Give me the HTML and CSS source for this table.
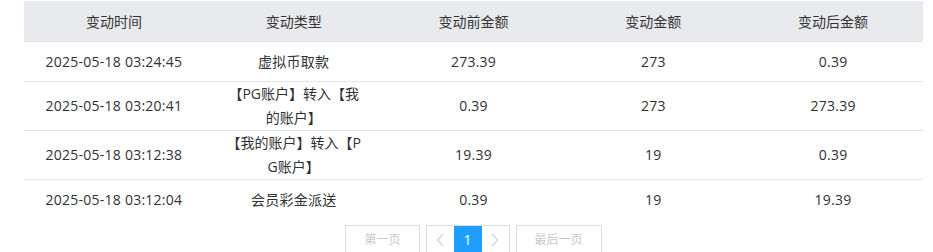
FILE: index.html
```html
<!DOCTYPE html>
<html lang="zh-CN">
<head>
<meta charset="utf-8">
<title>资金变动记录</title>
<link rel="stylesheet" href="styles.css">
</head>
<body>
<div class="wrap">
  <table class="records">
    <thead>
      <tr>
        <th>变动时间</th>
        <th>变动类型</th>
        <th>变动前金额</th>
        <th>变动金额</th>
        <th>变动后金额</th>
      </tr>
    </thead>
    <tbody>
      <tr>
        <td>2025-05-18 03:24:45</td>
        <td>虚拟币取款</td>
        <td>273.39</td>
        <td>273</td>
        <td>0.39</td>
      </tr>
      <tr>
        <td>2025-05-18 03:20:41</td>
        <td class="wrapcell">【PG账户】转入【我的账户】</td>
        <td>0.39</td>
        <td>273</td>
        <td>273.39</td>
      </tr>
      <tr>
        <td>2025-05-18 03:12:38</td>
        <td class="wrapcell">【我的账户】转入【PG账户】</td>
        <td>19.39</td>
        <td>19</td>
        <td>0.39</td>
      </tr>
      <tr>
        <td>2025-05-18 03:12:04</td>
        <td>会员彩金派送</td>
        <td>0.39</td>
        <td>19</td>
        <td>19.39</td>
      </tr>
    </tbody>
  </table>
  <div class="pager">
    <a class="pg-btn disabled">第一页</a>
    <div class="pg-group">
      <a class="pg-arrow"><svg width="8" height="14" viewBox="0 0 8 14"><path d="M7 1 L1.5 7 L7 13" fill="none" stroke="#d2d2d2" stroke-width="1.2"/></svg></a>
      <a class="pg-num active">1</a>
      <a class="pg-arrow"><svg width="8" height="14" viewBox="0 0 8 14"><path d="M1 1 L6.5 7 L1 13" fill="none" stroke="#d2d2d2" stroke-width="1.2"/></svg></a>
    </div>
    <a class="pg-btn disabled">最后一页</a>
  </div>
</div>
</body>
</html>
```

FILE: styles.css
```css
html, body {
  margin: 0;
  padding: 0;
  background: #fff;
}
body {
  font-family: "Open Sans", "Noto Sans CJK SC", sans-serif;
  font-size: 14px;
  color: #333;
}
.wrap {
  padding: 1px 10px 0 24px;
}
.records {
  width: 899px;
  table-layout: fixed;
  border-collapse: collapse;
}
.records th {
  background: #e9eaed;
  font-weight: normal;
  height: 40px;
  padding: 0;
  text-align: center;
  color: #333;
  border-bottom: 1px solid #e2e5ea;
}
.records td {
  height: 39px;
  padding: 0 20px;
  text-align: center;
  line-height: 24px;
  letter-spacing: 0.25px;
  color: #2f3136;
  border-bottom: 1px solid #e2e5ea;
}
.records td.wrapcell {
  word-break: break-all;
  letter-spacing: 0;
}
.records tbody tr:last-child td {
  border-bottom: none;
}
.pager {
  display: flex;
  justify-content: center;
  gap: 6px;
  margin-top: 6px;
  font-size: 12px;
}
.pg-btn {
  height: 28px;
  line-height: 28px;
  padding: 0 18px;
  border: 1px solid #d9dee5;
  color: #c8c8c8;
  background: #fff;
}
.pg-group {
  display: flex;
  border: 1px solid #d9dee5;
  height: 28px;
}
.pg-arrow {
  width: 27px;
  display: flex;
  align-items: center;
  justify-content: center;
}
.pg-num {
  width: 28px;
  text-align: center;
  line-height: 28px;
  font-size: 14px;
}
.pg-num.active {
  background: #1e9fff;
  color: #fff;
}
```
